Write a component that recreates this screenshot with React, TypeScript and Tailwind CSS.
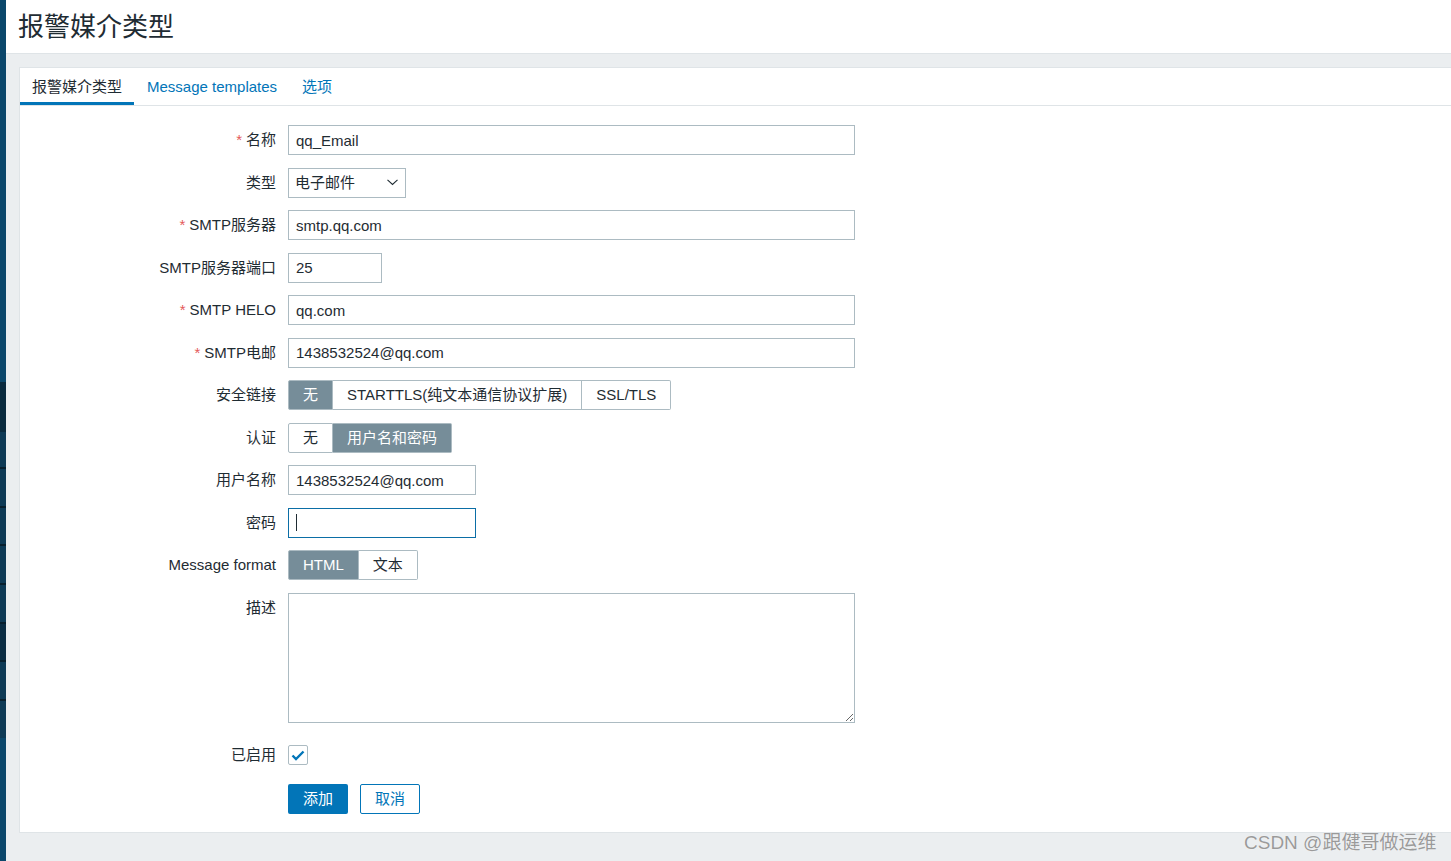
const font = { fontFamily: '"Liberation Sans", "Noto Sans CJK SC", sans-serif' };

function Label({ text, required }: { text: string; required?: boolean }) {
  return (
    <div className="w-[256px] shrink-0 text-right leading-[30px] text-[15px] text-[#1f2c33]">
      {required && <span className="text-[#e45959] mr-[4px]">*</span>}
      {text}
    </div>
  );
}

function TextBox({ value, w }: { value: string; w: string }) {
  return (
    <div className={`${w} h-[30px] border border-[#acbbc2] bg-white pl-[7px] pt-[2px] flex items-center text-[15px] text-[#1f2c33]`}>
      {value}
    </div>
  );
}

function Segments({ items, active }: { items: string[]; active: number }) {
  return (
    <div className="flex h-[30px] text-[15px]">
      {items.map((item, i) => (
        <div
          key={item}
          className={
            'h-[30px] px-[14px] pt-[1px] flex items-center border-[#acbbc2] ' +
            (i === 0 ? 'border rounded-l-[2px] ' : 'border-y border-r ') +
            (i === items.length - 1 ? 'rounded-r-[2px] ' : '') +
            (i === active ? 'bg-[#768d99] border-[#768d99] text-white' : 'bg-white text-[#1f2c33]')
          }
        >
          {item}
        </div>
      ))}
    </div>
  );
}

export default function App() {
  return (
    <div className="h-[861px] w-full flex overflow-hidden relative" style={font}>
      {/* sidebar edge */}
      <div className="w-[6px] shrink-0 flex flex-col">
        <div className="h-[382px] bg-[#0b476b]" />
        <div className="h-[50px] bg-[#0a2a3e]" />
        <div className="h-[37px] bg-[#0e3a56] border-b-2 border-[#081f2e]" />
        <div className="h-[39px] bg-[#0e3a56] border-b-2 border-[#081f2e]" />
        <div className="h-[38px] bg-[#0e3a56] border-b-2 border-[#081f2e]" />
        <div className="h-[39px] bg-[#0e3a56] border-b-2 border-[#081f2e]" />
        <div className="h-[39px] bg-[#0e3a56] border-b-2 border-[#081f2e]" />
        <div className="h-[38px] bg-[#0b2d44] border-b-2 border-[#081f2e]" />
        <div className="h-[39px] bg-[#0e3a56] border-b-2 border-[#081f2e]" />
        <div className="h-[37px] bg-[#0e3a56]" />
        <div className="flex-1 bg-[#0b476b]" />
      </div>

      <div className="flex-1 flex flex-col bg-[#ebeef0]">
        <div className="h-[54px] shrink-0 bg-white border-b border-[#dfe4e7] flex items-center pl-[12px]">
          <h1 className="text-[26px] text-[#1f2c33] leading-none">报警媒介类型</h1>
        </div>

        <div className="pl-[13px] pt-[13px]">
          <div className="bg-white border-l border-t border-b border-[#dfe4e7] h-[766px]">
            {/* tabs */}
            <div className="flex h-[38px] border-b border-[#dfe4e7] text-[15px]">
              <div className="pl-[12px] pr-[12px] w-[114px] flex items-center text-[#1f2c33] border-b-[3px] border-[#0275b8] pt-[5px]">
                报警媒介类型
              </div>
              <div className="pl-[13px] pr-[12px] pt-[2px] flex items-center text-[#0275b8]">Message templates</div>
              <div className="pl-[13px] pr-[12px] pt-[2px] flex items-center text-[#0275b8]">选项</div>
            </div>

            {/* form */}
            <div className="pt-[19px] flex flex-col gap-y-[12.5px]">
              <div className="flex gap-3">
                <Label text="名称" required />
                <TextBox value="qq_Email" w="w-[567px]" />
              </div>
              <div className="flex gap-3">
                <Label text="类型" />
                <div className="w-[118px] h-[30px] border border-[#acbbc2] bg-white pl-[6px] pr-[6px] pt-[2px] flex items-center justify-between text-[15px] text-[#1f2c33]">
                  <span>电子邮件</span>
                  <svg width="11" height="7" viewBox="0 0 11 7" className="mr-[1px] mb-[3px]">
                    <path d="M0.5 0.8 L5.5 5.5 L10.5 0.8" fill="none" stroke="#1f2c33" strokeWidth="1.1" />
                  </svg>
                </div>
              </div>
              <div className="flex gap-3">
                <Label text="SMTP服务器" required />
                <TextBox value="smtp.qq.com" w="w-[567px]" />
              </div>
              <div className="flex gap-3">
                <Label text="SMTP服务器端口" />
                <TextBox value="25" w="w-[94px]" />
              </div>
              <div className="flex gap-3">
                <Label text="SMTP HELO" required />
                <TextBox value="qq.com" w="w-[567px]" />
              </div>
              <div className="flex gap-3">
                <Label text="SMTP电邮" required />
                <TextBox value="1438532524@qq.com" w="w-[567px]" />
              </div>
              <div className="flex gap-3">
                <Label text="安全链接" />
                <Segments items={['无', 'STARTTLS(纯文本通信协议扩展)', 'SSL/TLS']} active={0} />
              </div>
              <div className="flex gap-3">
                <Label text="认证" />
                <Segments items={['无', '用户名和密码']} active={1} />
              </div>
              <div className="flex gap-3">
                <Label text="用户名称" />
                <TextBox value="1438532524@qq.com" w="w-[188px]" />
              </div>
              <div className="flex gap-3">
                <Label text="密码" />
                <div className="w-[188px] h-[30px] border border-[#0b6ea6] bg-white pl-[7px] flex items-center">
                  <span className="w-px h-[17px] bg-[#1f2c33]" />
                </div>
              </div>
              <div className="flex gap-3">
                <Label text="Message format" />
                <Segments items={['HTML', '文本']} active={0} />
              </div>
              <div className="flex gap-3">
                <Label text="描述" />
                <textarea
                  readOnly
                  className="w-[567px] h-[130px] border border-[#acbbc2] bg-white outline-none"
                />
              </div>
              <div className="flex gap-3 items-center mt-[10px]">
                <div className="w-[256px] shrink-0 text-right text-[15px] leading-[20px] text-[#1f2c33]">已启用</div>
                <div className="w-[20px] h-[20px] border border-[#acbbc2] rounded-[2px] bg-white flex items-center justify-center">
                  <svg width="14" height="11" viewBox="0 0 14 11">
                    <path d="M1.5 5.5 L5 9 L12.5 1.5" fill="none" stroke="#0275b8" strokeWidth="2.4" />
                  </svg>
                </div>
              </div>
              <div className="flex gap-[12px] pl-[268px] mt-[6px]">
                <button className="w-[60px] h-[30px] pt-[2px] bg-[#0275b8] text-white text-[15px] rounded-[2px]">添加</button>
                <button className="w-[60px] h-[30px] pt-[2px] bg-white border border-[#0275b8] text-[#0275b8] text-[15px] rounded-[2px]">取消</button>
              </div>
            </div>
          </div>
        </div>
      </div>

      <div className="absolute left-[1244px] top-[829px] text-[19px] text-[#9a9a9a] [text-shadow:0_0_1px_#ffffff]">
        CSDN @跟健哥做运维
      </div>
    </div>
  );
}
